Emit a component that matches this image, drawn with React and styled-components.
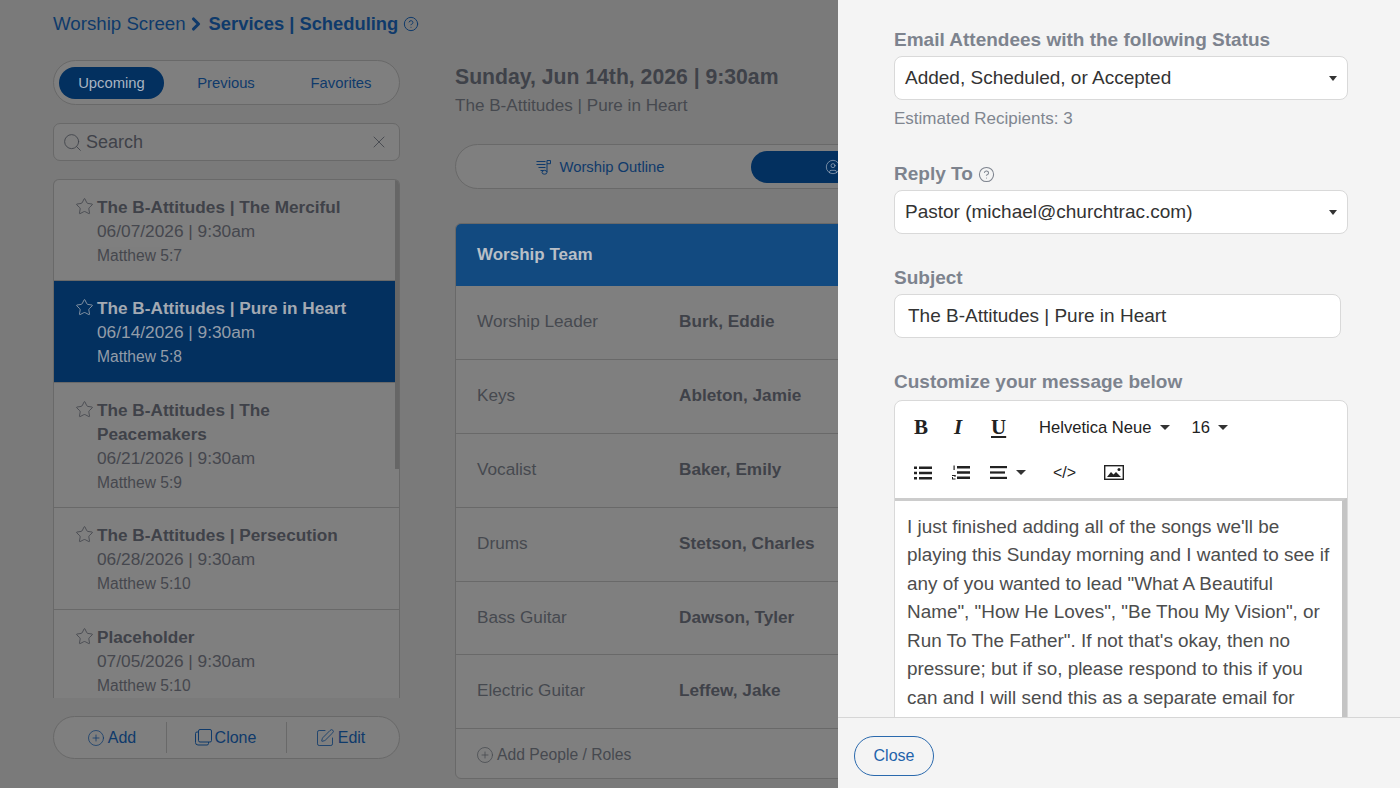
import React from 'react'
import styled, { createGlobalStyle } from 'styled-components'
import { Star, Search, X, CirclePlus, SquarePen, CircleHelp, CircleUser, ChevronRight } from 'lucide-react'

const GlobalStyle = createGlobalStyle`
  html, body { margin: 0; padding: 0; background: #7a7a7a; }
  body { font-family: "Liberation Sans", Arial, sans-serif; }
  * { box-sizing: border-box; }
`

const Screen = styled.div`
  position: relative;
  width: 1400px;
  height: 788px;
  overflow: hidden;
  background: #7a7a7a;
`
const Page = styled.div`
  padding: 10px 0 0 53px;
  height: 100%;
`
const Breadcrumb = styled.div`
  display: flex;
  align-items: center;
  height: 28px;
  font-size: 18.7px;
  color: #0f3a6b;
`
const CrumbStrong = styled.b`
  font-size: 18.35px;
  font-weight: 700;
  margin-left: 3px;
`
const HelpIcon = styled(CircleHelp)`
  margin-left: 5px;
`
const Columns = styled.div`
  display: flex;
  gap: 55px;
  margin-top: 22px;
`
const Sidebar = styled.div`
  width: 347px;
  flex: none;
`
const Segmented = styled.div`
  display: flex;
  align-items: center;
  height: 45px;
  padding: 0 5px;
  border: 1px solid #696969;
  border-radius: 23px;
  background: #7f7f7f;
`
const SegButton = styled.div`
  flex: none;
  width: ${p => p.$width}px;
  height: 32px;
  border-radius: 16px;
  display: flex;
  align-items: center;
  justify-content: ${p => (p.$lead ? 'flex-start' : 'center')};
  gap: 8px;
  padding-left: ${p => p.$lead ?? 0}px;
  padding-right: ${p => p.$shift ?? 0}px;
  font-size: 14.8px;
  white-space: nowrap;
  color: ${p => (p.$active ? '#a9b4c2' : '#0f3a6b')};
  background: ${p => (p.$active ? '#03305f' : 'transparent')};
`
const SearchBox = styled.div`
  display: flex;
  align-items: center;
  height: 38px;
  margin-top: 18px;
  padding: 0 10px 0 8px;
  border: 1px solid #696969;
  border-radius: 7px;
  background: #7f7f7f;
  color: #3f4249;
  font-size: 18px;
`
const SearchText = styled.span`
  flex: 1;
  margin-left: 3px;
`
const List = styled.div`
  position: relative;
  height: 519px;
  margin-top: 18px;
  overflow: hidden;
  border: 1px solid #696969;
  border-bottom: 0;
  border-radius: 6px 6px 0 0;
  background: #7f7f7f;
`
const ScrollThumb = styled.div`
  position: absolute;
  top: 0;
  right: 0;
  width: 4px;
  height: 289px;
  background: #666;
`
const Row = styled.div`
  display: flex;
  gap: 3px;
  padding: 15px 40px 12.4px 21px;
  border-bottom: 1px solid #696969;
  background: ${p => (p.$active ? '#03305f' : 'transparent')};
  color: ${p => (p.$active ? '#a3a9b2' : '#3f4249')};
`
const RowStar = styled(Star)`
  flex: none;
  margin-top: 2px;
`
const RowTitle = styled.div`
  font-size: 17.2px;
  font-weight: 700;
  line-height: 24px;
`
const RowDate = styled.div`
  font-size: 17.3px;
  line-height: 24px;
  opacity: 0.9;
`
const RowVerse = styled.div`
  font-size: 15.6px;
  line-height: 25px;
  opacity: 0.9;
`
const ActionBar = styled.div`
  display: flex;
  align-items: center;
  height: 43px;
  margin-top: 18px;
  border: 1px solid #696969;
  border-radius: 22px;
  background: #7f7f7f;
`
const Action = styled.div`
  flex: none;
  width: ${p => p.$width}px;
  height: 31px;
  display: flex;
  align-items: center;
  justify-content: center;
  gap: 3px;
  padding-left: ${p => p.$left ?? 0}px;
  padding-right: ${p => p.$right ?? 0}px;
  font-size: 16px;
  color: #0f3a6b;
  & + & {
    border-left: 1px solid #696969;
  }
`
const Main = styled.div`
  width: 891px;
  flex: none;
`
const MainTitle = styled.div`
  font-size: 21.2px;
  font-weight: 700;
  line-height: 34px;
  color: #3f4249;
`
const MainSub = styled.div`
  font-size: 17.1px;
  line-height: 24px;
  color: #46494f;
`
const Tabs = styled.div`
  display: flex;
  align-items: center;
  height: 45px;
  margin-top: 26px;
  padding: 0 5px;
  border: 1px solid #696969;
  border-radius: 23px;
  background: #7f7f7f;
  width: 590px;
`
const TeamPanel = styled.div`
  margin-top: 34px;
  border: 1px solid #696969;
  border-radius: 6px;
  background: #7f7f7f;
  overflow: hidden;
`
const TeamHeader = styled.div`
  display: flex;
  align-items: center;
  height: 62px;
  padding-left: 21px;
  background: #124a80;
  color: #b9bfc6;
  font-size: 17px;
  font-weight: 700;
`
const TeamRow = styled.div`
  display: flex;
  align-items: center;
  height: 73.9px;
  padding: 0 0 2px 21px;
  border-bottom: 1px solid #696969;
  font-size: 17.2px;
`
const Role = styled.div`
  width: 202px;
  color: #46494f;
`
const Person = styled.div`
  font-weight: 700;
  color: #3f4249;
`
const TeamFooter = styled.div`
  display: flex;
  align-items: center;
  gap: 3px;
  height: 49px;
  padding: 2px 0 0 20px;
  font-size: 15.7px;
  color: #46494f;
`
const Drawer = styled.div`
  position: absolute;
  top: 0;
  right: 0;
  bottom: 0;
  width: 562px;
  display: flex;
  flex-direction: column;
  background: #f4f4f4;
`
const DrawerBody = styled.div`
  flex: 1;
  min-height: 0;
  overflow: hidden;
  padding: 28px 52px 0 56px;
`
const DrawerFooter = styled.div`
  flex: none;
  height: 71px;
  display: flex;
  align-items: center;
  padding: 5px 0 0 16px;
  border-top: 1px solid #d6d6d6;
  background: #f4f4f4;
`
const CloseButton = styled.button`
  width: 80px;
  height: 40px;
  border: 1.5px solid #2a69ad;
  border-radius: 20px;
  background: transparent;
  color: #1f63ab;
  font: 16px "Liberation Sans", Arial, sans-serif;
`
const Field = styled.div`
  margin-bottom: ${p => p.$gap ?? 32}px;
`
const Label = styled.div`
  display: flex;
  align-items: center;
  gap: 5px;
  height: 24px;
  font-size: 19px;
  font-weight: 700;
  color: #7d838e;
`
const Select = styled.div`
  display: flex;
  align-items: center;
  justify-content: space-between;
  height: 44px;
  margin-top: 4px;
  padding: 0 10px;
  border: 1px solid #d9d9d9;
  border-radius: 8px;
  background: #fff;
  font-size: 19px;
  color: #333;
`
const TextInput = styled(Select)`
  width: 447px;
  padding: 0 13px;
`
const Caret = styled.span`
  width: 0;
  height: 0;
  border-left: ${p => p.$size ?? 4}px solid transparent;
  border-right: ${p => p.$size ?? 4}px solid transparent;
  border-top: ${p => p.$size ?? 5}px solid #333;
`
const Hint = styled.div`
  margin-top: 9px;
  font-size: 17px;
  line-height: 20px;
  color: #808690;
`
const Editor = styled.div`
  margin-top: 6px;
  border: 1px solid #d9d9d9;
  border-radius: 8px 8px 0 0;
  background: #fff;
`
const ToolRow = styled.div`
  display: flex;
  align-items: center;
  height: ${p => p.$height}px;
  padding: ${p => p.$drop ?? 0}px 0 ${p => p.$lift ?? 0}px 19px;
  color: #222;
`
const ToolLetter = styled.span`
  width: ${p => p.$width ?? 38}px;
  font-family: "Liberation Serif", serif;
  font-size: 21px;
  font-weight: 700;
  font-style: ${p => (p.$italic ? 'italic' : 'normal')};
  text-decoration: ${p => (p.$underline ? 'underline' : 'none')};
`
const ToolDrop = styled.span`
  display: flex;
  align-items: center;
  gap: 8px;
  margin-right: 22px;
  font-size: 16.6px;
`
const ToolIcon = styled.span`
  display: flex;
  align-items: center;
  gap: 9px;
  width: ${p => p.$width ?? 38}px;
`
const CodeTool = styled.span`
  width: 51px;
  font-size: 16px;
`
const EditorBody = styled.div`
  border-top: 3px solid #ccc;
  border-right: 5px solid #c4c4c4;
  padding: 11.5px 8px 0 12px;
  font-size: 18.9px;
  line-height: 28.5px;
  color: #4d4d4d;
`

const services = [
  { title: 'The B-Attitudes | The Merciful', date: '06/07/2026 | 9:30am', verse: 'Matthew 5:7' },
  { title: 'The B-Attitudes | Pure in Heart', date: '06/14/2026 | 9:30am', verse: 'Matthew 5:8', active: true },
  { title: 'The B-Attitudes | The Peacemakers', date: '06/21/2026 | 9:30am', verse: 'Matthew 5:9' },
  { title: 'The B-Attitudes | Persecution', date: '06/28/2026 | 9:30am', verse: 'Matthew 5:10' },
  { title: 'Placeholder', date: '07/05/2026 | 9:30am', verse: 'Matthew 5:10' },
]

const team = [
  ['Worship Leader', 'Burk, Eddie'],
  ['Keys', 'Ableton, Jamie'],
  ['Vocalist', 'Baker, Emily'],
  ['Drums', 'Stetson, Charles'],
  ['Bass Guitar', 'Dawson, Tyler'],
  ['Electric Guitar', 'Leffew, Jake'],
]

function CloneIcon() {
  return (
    <svg width="17" height="17" viewBox="0 0 17 17" fill="none" stroke="currentColor" strokeWidth="1">
      <rect x="3.5" y="0.5" width="13" height="12.5" rx="1.5" />
      <path d="M3.5 3H2a1.5 1.5 0 0 0-1.5 1.5v9A2.5 2.5 0 0 0 3 16h9a1.5 1.5 0 0 0 1.500-1.500V13" />
    </svg>
  )
}

function MusicListIcon() {
  return (
    <svg width="16" height="16" viewBox="0 0 16 16" fill="none" stroke="currentColor" strokeWidth="1">
      <path d="M0.500 2.500h9M0.500 5.500h9M2.500 8.500h7M4.500 11.500h3" />
      <path d="M11 13V1.500h3.500v3.200H11" />
      <ellipse cx="8.500" cy="13.300" rx="2.500" ry="1.900" />
    </svg>
  )
}

function BulletsIcon() {
  return (
    <svg width="18" height="14" viewBox="0 0 18 14" fill="#222">
      <rect x="0" y="0.500" width="3" height="2.500" />
      <rect x="5" y="0.500" width="13" height="2.500" />
      <rect x="0" y="5.750" width="3" height="2.500" />
      <rect x="5" y="5.750" width="13" height="2.500" />
      <rect x="0" y="11" width="3" height="2.500" />
      <rect x="5" y="11" width="13" height="2.500" />
    </svg>
  )
}

function NumbersIcon() {
  return (
    <svg width="18" height="15" viewBox="0 0 18 15" fill="#222">
      <rect x="5" y="1" width="13" height="2.500" />
      <rect x="5" y="6.250" width="13" height="2.500" />
      <rect x="5" y="11.500" width="13" height="2.500" />
      <rect x="1.500" y="0.500" width="1.200" height="4.500" />
      <rect x="0" y="10" width="3.500" height="1" />
      <rect x="0" y="13.500" width="3.500" height="1" />
      <rect x="2.500" y="10" width="1" height="2" />
      <rect x="0" y="12" width="1" height="2" />
    </svg>
  )
}

function AlignIcon() {
  return (
    <svg width="17" height="13" viewBox="0 0 17 13" fill="#222">
      <rect x="0" y="0" width="17" height="2.200" />
      <rect x="0" y="5.400" width="15" height="2.200" />
      <rect x="0" y="10.800" width="17" height="2.200" />
    </svg>
  )
}

function PictureIcon() {
  return (
    <svg width="20" height="15" viewBox="0 0 20 15" fill="none">
      <rect x="0.700" y="0.700" width="18.600" height="13.600" stroke="#222" strokeWidth="1.400" />
      <path d="M3 12l4-5 2.500 2.500L12 7l5 5z" fill="#222" />
      <circle cx="15" cy="4.500" r="1.500" fill="#222" />
    </svg>
  )
}

export default function App() {
  return (
    <Screen>
      <GlobalStyle />
      <Page>
        <Breadcrumb>
          Worship Screen
          <ChevronRight size={20} strokeWidth={3.8} />
          <CrumbStrong>Services | Scheduling</CrumbStrong>
          <HelpIcon size={16} strokeWidth={1.5} />
        </Breadcrumb>
        <Columns>
          <Sidebar>
            <Segmented>
              <SegButton $width={105} $active>Upcoming</SegButton>
              <SegButton $width={124}>Previous</SegButton>
              <SegButton $width={106}>Favorites</SegButton>
            </Segmented>
            <SearchBox>
              <Search size={21} strokeWidth={1} />
              <SearchText>Search</SearchText>
              <X size={20} strokeWidth={1} />
            </SearchBox>
            <List>
              {services.map(s => (
                <Row key={s.date} $active={s.active}>
                  <RowStar size={19} strokeWidth={1} />
                  <div>
                    <RowTitle>{s.title}</RowTitle>
                    <RowDate>{s.date}</RowDate>
                    <RowVerse>{s.verse}</RowVerse>
                  </div>
                </Row>
              ))}
              <ScrollThumb />
            </List>
            <ActionBar>
              <Action $width={112} $left={3}><CirclePlus size={18} strokeWidth={1} />Add</Action>
              <Action $width={120} $right={2}><CloneIcon />Clone</Action>
              <Action $width={113} $right={6}><SquarePen size={20} strokeWidth={1} />Edit</Action>
            </ActionBar>
          </Sidebar>
          <Main>
            <MainTitle>Sunday, Jun 14th, 2026 | 9:30am</MainTitle>
            <MainSub>The B-Attitudes | Pure in Heart</MainSub>
            <Tabs>
              <SegButton $width={290} $shift={12}><MusicListIcon />Worship Outline</SegButton>
              <SegButton $width={289} $active $lead={74}><CircleUser size={16} strokeWidth={1} /></SegButton>
            </Tabs>
            <TeamPanel>
              <TeamHeader>Worship Team</TeamHeader>
              {team.map(([role, person]) => (
                <TeamRow key={role}>
                  <Role>{role}</Role>
                  <Person>{person}</Person>
                </TeamRow>
              ))}
              <TeamFooter><CirclePlus size={18} strokeWidth={1} />Add People / Roles</TeamFooter>
            </TeamPanel>
          </Main>
        </Columns>
      </Page>
      <Drawer>
        <DrawerBody>
          <Field $gap={33}>
            <Label>Email Attendees with the following Status</Label>
            <Select>Added, Scheduled, or Accepted<Caret /></Select>
            <Hint>Estimated Recipients: 3</Hint>
          </Field>
          <Field>
            <Label>Reply To<CircleHelp size={17} strokeWidth={1.5} /></Label>
            <Select>Pastor (michael@churchtrac.com)<Caret /></Select>
          </Field>
          <Field>
            <Label>Subject</Label>
            <TextInput>The B-Attitudes | Pure in Heart</TextInput>
          </Field>
          <Field $gap={0}>
            <Label>Customize your message below</Label>
            <Editor>
              <ToolRow $height={52} $drop={1}>
                <ToolLetter $width={40}>B</ToolLetter>
                <ToolLetter $italic $width={37}>I</ToolLetter>
                <ToolLetter $underline $width={48}>U</ToolLetter>
                <ToolDrop>Helvetica Neue <Caret $size={5} /></ToolDrop>
                <ToolDrop>16 <Caret $size={5} /></ToolDrop>
              </ToolRow>
              <ToolRow $height={45} $lift={6}>
                <ToolIcon><BulletsIcon /></ToolIcon>
                <ToolIcon><NumbersIcon /></ToolIcon>
                <ToolIcon $width={63}><AlignIcon /><Caret $size={5} /></ToolIcon>
                <CodeTool>&lt;/&gt;</CodeTool>
                <PictureIcon />
              </ToolRow>
              <EditorBody>
                I just finished adding all of the songs we'll be playing this Sunday morning and I wanted to see if any of you wanted to lead "What A Beautiful Name", "How He Loves", "Be Thou My Vision", or Run To The Father". If not that's okay, then no pressure; but if so, please respond to this if you can and I will send this as a separate email for anyone to respond to as a team.
              </EditorBody>
            </Editor>
          </Field>
        </DrawerBody>
        <DrawerFooter>
          <CloseButton>Close</CloseButton>
        </DrawerFooter>
      </Drawer>
    </Screen>
  )
}
